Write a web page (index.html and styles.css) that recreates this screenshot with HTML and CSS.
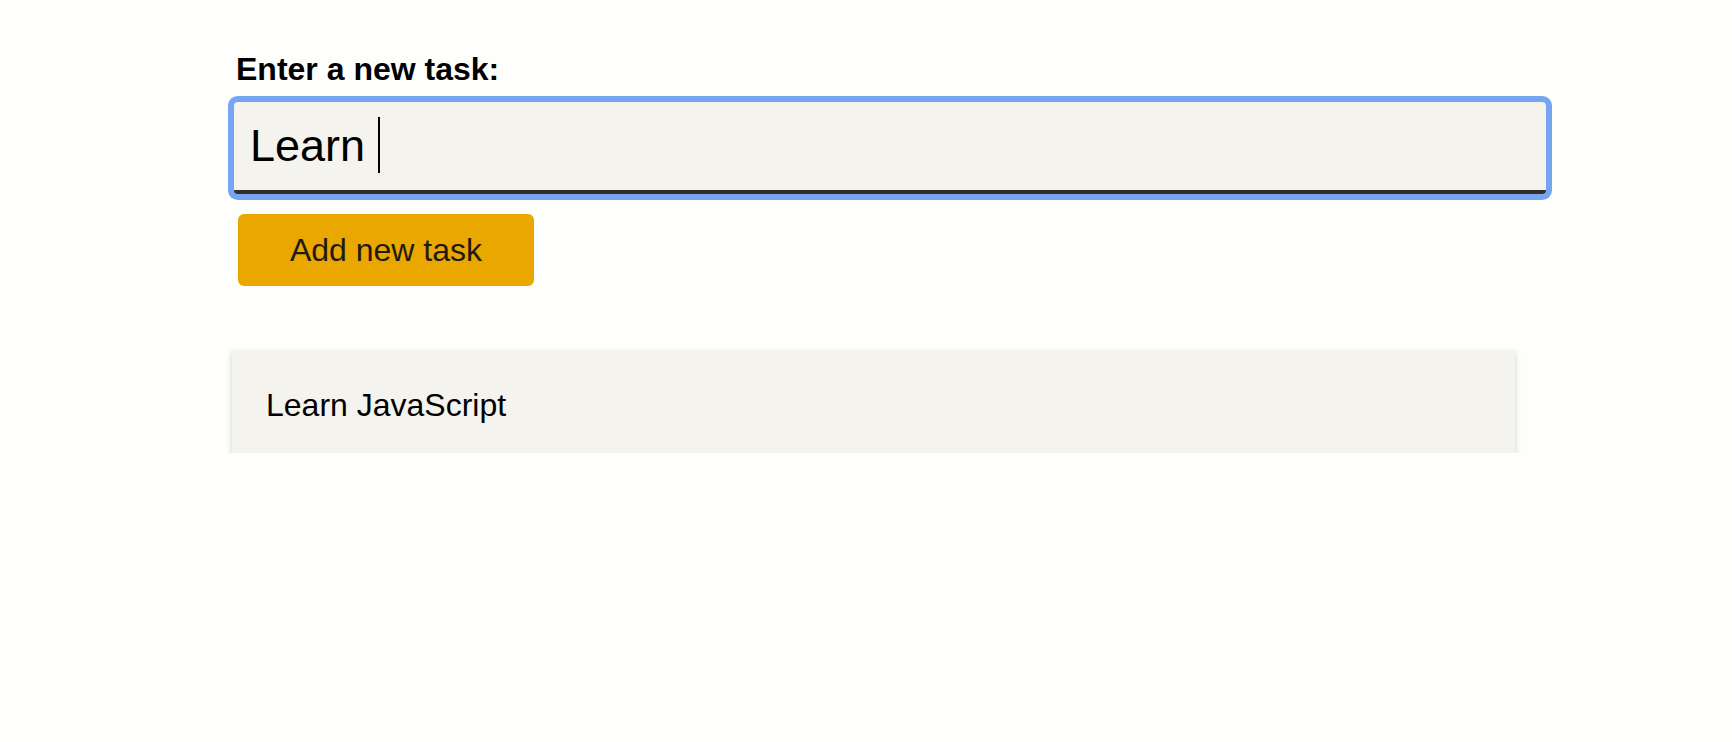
FILE: index.html
```html
<!DOCTYPE html>
<html lang="en">
<head>
<meta charset="utf-8">
<title>Tasks</title>
<link rel="stylesheet" href="styles.css">
</head>
<body>
<main class="app">
  <form class="task-form">
    <label class="task-label" for="task">Enter a new task:</label>
    <div class="field">
      <input class="task-input is-focused" id="task" type="text" value="Learn">
      <span class="caret"></span>
    </div>
    <button class="add-btn" type="button">Add new task</button>
  </form>
  <ul class="task-list">
    <li class="task-item">Learn JavaScript</li>
  </ul>
</main>
</body>
</html>
```

FILE: styles.css
```css
* { box-sizing: border-box; }

html, body {
  margin: 0;
  padding: 0;
  background: #fefefc;
  font-family: "Liberation Sans", Arial, sans-serif;
  color: #000;
}

.app {
  width: 1312px;
  margin-left: 234px;
  padding-top: 51px;
}

.task-form {
  display: flex;
  flex-direction: column;
  align-items: flex-start;
}

.task-label {
  display: block;
  margin-left: 2px;
  font-size: 32px;
  font-weight: 700;
  line-height: 37px;
  margin-bottom: 14px;
}

.field {
  position: relative;
  width: 100%;
}

.task-input {
  display: block;
  width: 100%;
  height: 92px;
  margin: 0;
  padding: 0 16px;
  border: none;
  border-bottom: 4px solid #2f2e2a;
  background: #f4f3ee;
  font-family: "Liberation Sans", Arial, sans-serif;
  font-size: 45px;
  color: #000;
  outline: none;
}

.task-input.is-focused {
  box-shadow: 0 0 0 6px #76a6f2;
  border-radius: 4px;
}

.caret {
  position: absolute;
  left: 144px;
  top: 15px;
  width: 2px;
  height: 56px;
  background: #000;
}

.add-btn {
  margin: 20px 0 0 4px;
  width: 296px;
  height: 72px;
  border: none;
  border-radius: 6px;
  background: #e9a700;
  color: #1f1b12;
  font-family: "Liberation Sans", Arial, sans-serif;
  font-size: 32px;
  padding: 0;
  cursor: pointer;
}

.task-list {
  list-style: none;
  margin: 64px 0 0 -2px;
  padding: 0;
}

.task-item {
  width: 1283px;
  height: 103px;
  padding: 37px 34px 29px;
  background: #f4f3ed;
  font-size: 32px;
  line-height: 37px;
  box-shadow: 0 3px 6px rgba(0, 0, 0, 0.2);
}
```
